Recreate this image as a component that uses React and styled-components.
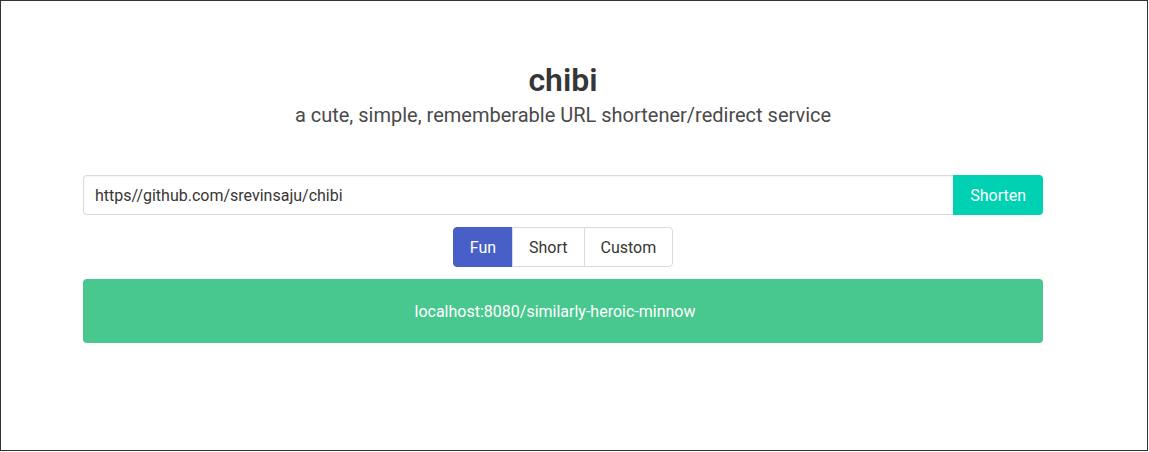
import React, { useState } from "react";
import styled, { createGlobalStyle } from "styled-components";

const Global = createGlobalStyle`
  html, body { margin: 0; padding: 0; background: #fff; }
  body {
    font-family: Roboto, "Noto Sans", "Liberation Sans", sans-serif;
    font-size: 16px;
    color: #4a4a4a;
  }
  *, *::before, *::after { box-sizing: border-box; }
`;

const Frame = styled.div`
  width: 1148px;
  height: 451px;
  border: 1px solid #333;
  background: #fff;
  padding: 61px 0 0 82px;
`;

const Column = styled.main`
  width: 960px;
  display: flex;
  flex-direction: column;
`;

const Title = styled.h1`
  margin: 0;
  text-align: center;
  font-size: 32px;
  font-weight: 600;
  line-height: 36px;
  color: #363636;
`;

const Subtitle = styled.h2`
  margin: 5px 0 0;
  text-align: center;
  font-size: 20px;
  font-weight: 400;
  line-height: 25px;
  color: #4a4a4a;
`;

const Field = styled.div`
  display: flex;
  margin-top: ${(p) => p.$top}px;
  justify-content: ${(p) => (p.$center ? "center" : "stretch")};
`;

const Input = styled.input`
  flex: 1;
  height: 40px;
  border: 1px solid #dbdbdb;
  border-right: none;
  border-radius: 4px 0 0 4px;
  padding: 0 11px;
  font-family: inherit;
  font-size: 16px;
  color: #363636;
  box-shadow: inset 0 0.0625em 0.125em rgba(10, 10, 10, 0.05);
  outline: none;
`;

const ShortenButton = styled.button`
  height: 40px;
  padding: 0 16px;
  border: 1px solid transparent;
  border-radius: 0 4px 4px 0;
  background: #00d1b2;
  color: #fff;
  font-family: inherit;
  font-size: 16px;
  cursor: pointer;
`;

const ModeButton = styled.button`
  height: 40px;
  padding: 0 16px;
  margin-left: -1px;
  border: 1px solid ${(p) => (p.$active ? "#485fc7" : "#dbdbdb")};
  background: ${(p) => (p.$active ? "#485fc7" : "#fff")};
  color: ${(p) => (p.$active ? "#fff" : "#363636")};
  font-family: inherit;
  font-size: 16px;
  border-radius: 0;
  cursor: pointer;
  &:first-child { margin-left: 0; border-radius: 4px 0 0 4px; }
  &:last-child { border-radius: 0 4px 4px 0; }
`;

const Notification = styled.div`
  margin-top: 12px;
  background: #48c78e;
  color: #fff;
  border-radius: 4px;
  padding: 21px 40px 19px 24px;
  line-height: 24px;
  font-size: 16px;
  text-align: center;
`;

export default function App() {
  const [mode, setMode] = useState("Fun");
  return (
    <>
      <Global />
      <Frame>
        <Column>
          <Title>chibi</Title>
          <Subtitle>a cute, simple, rememberable URL shortener/redirect service</Subtitle>
          <Field $top={47}>
            <Input defaultValue="https//github.com/srevinsaju/chibi" />
            <ShortenButton>Shorten</ShortenButton>
          </Field>
          <Field $top={12} $center>
            {["Fun", "Short", "Custom"].map((m) => (
              <ModeButton key={m} $active={mode === m} onClick={() => setMode(m)}>
                {m}
              </ModeButton>
            ))}
          </Field>
          <Notification>localhost:8080/similarly-heroic-minnow</Notification>
        </Column>
      </Frame>
    </>
  );
}
